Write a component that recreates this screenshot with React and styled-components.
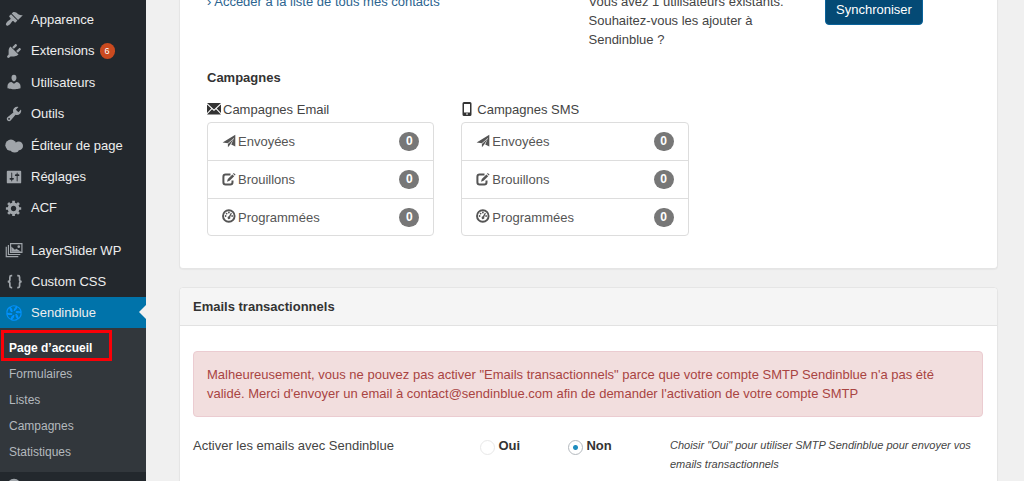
import React from "react";
import styled, { createGlobalStyle, css } from "styled-components";

const GlobalStyle = createGlobalStyle`
  * { box-sizing: border-box; }
  body {
    margin: 0;
    background: #f0f0f0;
    color: #444;
    font-family: "Liberation Sans", Arial, sans-serif;
    font-size: 13px;
    line-height: 19px;
  }
  ul { margin: 0; padding: 0; list-style: none; }
  h2, h3, p { margin: 0; font-size: 13px; }
  a { color: inherit; text-decoration: none; }
`;

const Shell = styled.div`
  display: flex;
  height: 100vh;
  overflow: hidden;
`;

/* ---------- sidebar ---------- */

const Sidebar = styled.nav`
  flex: none;
  width: 146px;
  padding-top: 3px;
  background: #23282d;
  color: #eee;
`;

const MenuGroup = styled.ul`
  & + & { margin-top: 11px; }
`;

const MenuItem = styled.li`
  & > a { height: 32px; }
  &:nth-child(even) > a { height: 31px; }
  &:last-child > a { height: 31px; }
`;

const MenuLink = styled.a`
  position: relative;
  display: flex;
  align-items: center;
  gap: 8px;
  padding-left: 5px;
  white-space: nowrap;
  svg { flex: none; color: #a0a5aa; }
  ${(p) =>
    p.$current &&
    css`
      background: #0073aa;
      svg { color: #0092ff; }
      &::after {
        content: "";
        position: absolute;
        right: 0;
        top: 8px;
        border: 7px solid transparent;
        border-left: 0;
        border-right-color: #f0f0f0;
      }
    `}
`;

const UpdateCount = styled.span`
  width: 15px;
  height: 16px;
  margin-left: -3px;
  border-radius: 8px;
  background: #ca4a1f;
  color: #fff;
  font-size: 9px;
  line-height: 16px;
  text-align: center;
`;

const SubMenu = styled.ul`
  padding: 7px 0;
  background: #32373c;
`;

const SubItem = styled.li`
  position: relative;
  padding-left: 9px;
  color: ${(p) => (p.$current ? "#fff" : "#b4b9be")};
  font-size: 12px;
  font-weight: ${(p) => (p.$current ? "bold" : "normal")};
  line-height: 26px;
`;

const Highlight = styled.span`
  position: absolute;
  left: 1px;
  top: -5px;
  width: 111px;
  height: 31px;
  border: 3px solid #fb0007;
`;

const CollapseButton = styled.button`
  display: block;
  margin: 5px 0 0 5px;
  padding: 0;
  border: 0;
  background: none;
  color: #a0a5aa;
`;

/* ---------- content ---------- */

const Content = styled.main`
  flex: 1;
  min-width: 0;
  padding: 0 26px 0 33px;
`;

const Panel = styled.section`
  border: 1px solid #e5e5e5;
  border-radius: 4px;
  background: #fff;
  box-shadow: 0 1px 1px rgba(0, 0, 0, 0.04);
`;

const StatsPanel = styled(Panel)`
  margin-bottom: 18px;
  padding: 0 27px 32px;
  border-top: 0;
`;

const PanelTitle = styled.h2`
  padding: 9px 13px;
  border-bottom: 1px solid #e2e2e2;
  border-radius: 4px 4px 0 0;
  background: #f5f5f5;
  color: #333;
`;

const PanelBody = styled.div`
  padding: 25px 14px 40px 13px;
`;

const SyncRow = styled.div`
  display: grid;
  grid-template-columns: 50% 31% 1fr;
  align-items: start;
  margin-top: -8px;
`;

const ContactsLink = styled.a`
  color: #2c648f;
`;

const SyncText = styled.p`
  padding-right: 27px;
`;

const SyncButton = styled.button`
  justify-self: start;
  height: 31px;
  margin-top: 2px;
  padding: 0 10px;
  border: 1px solid #0a639b;
  border-radius: 4px;
  background: #044a75;
  color: #fff;
  font: inherit;
`;

const SectionTitle = styled.h3`
  margin: 19px 0 13px;
  color: #333;
`;

const Campaigns = styled.div`
  display: grid;
  grid-template-columns: repeat(3, 1fr);
`;

const Campaign = styled.div`
  padding-right: 27px;
`;

const CampaignTitle = styled.p`
  display: flex;
  align-items: center;
  gap: ${(p) => p.$gap}px;
  margin-bottom: 3px;
  svg { color: #333; margin-top: -2px; }
`;

const CountList = styled.ul`
  border: 1px solid #ddd;
  border-radius: 4px;
  color: #555;
`;

const CountRow = styled.li`
  display: flex;
  align-items: center;
  gap: 2px;
  height: 37px;
  padding: 0 14px;
  & + & { height: 38px; border-top: 1px solid #ddd; }
  &:last-child { height: 37px; }
  svg { flex: none; margin-top: -2px; }
`;

const Count = styled.span`
  min-width: 20px;
  margin-left: auto;
  border-radius: 10px;
  background: #777;
  color: #fff;
  font-size: 12px;
  font-weight: bold;
  text-align: center;
`;

const Alert = styled.div`
  margin-bottom: 19px;
  padding: 13px;
  border: 1px solid #ebccd1;
  border-radius: 4px;
  background: #f2dede;
  color: #a94442;
`;

const SettingRow = styled.div`
  display: grid;
  grid-template-columns: 36% 24% 1fr;
  align-items: start;
`;

const Choices = styled.div`
  display: flex;
  padding-left: 3px;
`;

const Choice = styled.label`
  display: flex;
  align-items: flex-end;
  gap: 3px;
  width: 88px;
  height: 19px;
  color: #333;
  font-weight: bold;
`;

const Radio = styled.input`
  appearance: none;
  width: 15px;
  height: 15px;
  margin: 0;
  border: 1px solid ${(p) => (p.defaultChecked ? "#b4b9be" : "#e8e8e8")};
  border-radius: 50%;
  background: #fff;
  &:checked { background: radial-gradient(circle, #1e8cbe 2px, #fff 3px); }
`;

const Help = styled.p`
  padding-left: 3px;
  font-size: 11px;
  font-style: italic;
`;

/* ---------- icons ---------- */

const MenuIcon = ({ children }) => (
  <svg width="18" height="18" viewBox="0 0 20 20" fill="currentColor" aria-hidden="true">
    {children}
  </svg>
);

const Glyph = ({ children, w = 14 }) => (
  <svg width={w} height="14" viewBox={`0 0 ${w} 14`} fill="currentColor" aria-hidden="true">
    {children}
  </svg>
);

const icons = {
  appearance: (
    <path d="M14.48 11.06L7.41 3.99l1.5-1.5c.5-.56 2.3-.47 3.51.32 1.21.8 1.43 1.28 2.91 2.1 1.18.64 2.45 1.26 4.45.85zm-.71.71L6.7 4.7 4.93 6.47c-.39.39-.39 1.02 0 1.41l1.06 1.06c.39.39.39 1.03 0 1.42-.6.6-1.43 1.11-2.21 1.69-.35.26-.7.53-1.01.84C1.43 14.23.4 16.08 1.4 17.07c.99 1 2.84-.03 4.18-1.36.31-.31.58-.66.85-1.02.57-.78 1.08-1.61 1.69-2.21.39-.39 1.02-.39 1.41 0l1.06 1.06c.39.39 1.02.39 1.41 0z" />
  ),
  plugins: (
    <path d="M13.11 4.36L9.87 7.6 8 5.73l3.24-3.24c.35-.34 1.05-.2 1.56.32.52.51.66 1.21.31 1.55zm-8 1.77l.91-1.12 9.01 9.01-1.19.84c-.71.71-2.63 1.16-3.82 1.16H6.14L4.9 17.26c-.59.59-1.54.59-2.12 0-.59-.58-.59-1.53 0-2.12l1.24-1.24v-3.88c0-1.13.4-3.19 1.09-3.89zm7.26 3.97l3.24-3.24c.34-.35 1.04-.21 1.55.31.52.51.66 1.21.31 1.55l-3.24 3.25z" />
  ),
  users: (
    <path d="M10 9.25c-2.27 0-2.73-3.44-2.73-3.44C7 4.02 7.82 2 9.97 2c2.16 0 2.98 2.02 2.71 3.81 0 0-.41 3.44-2.68 3.44zm0 2.57L12.72 10c2.39 0 4.52 2.33 4.52 4.53v2.49s-3.65 1.13-7.24 1.13c-3.65 0-7.24-1.13-7.24-1.13v-2.49c0-2.25 1.94-4.48 4.47-4.48z" />
  ),
  tools: (
    <path d="M16.68 9.77c-1.34 1.34-3.3 1.67-4.95.99l-5.41 6.52c-.99.99-2.59.99-3.58 0s-.99-2.59 0-3.57l6.52-5.42c-.68-1.65-.35-3.61.99-4.95 1.28-1.28 3.12-1.62 4.72-1.06l-2.89 2.89 2.82 2.82 2.86-2.87c.53 1.58.18 3.39-1.08 4.65zM3.81 16.21c.4.39 1.04.39 1.43 0 .4-.4.4-1.04 0-1.43-.39-.4-1.03-.4-1.43 0-.39.39-.39 1.03 0 1.43z" />
  ),
  editor: (
    <g>
      <circle cx="6.6" cy="10.2" r="6.2" />
      <circle cx="15.2" cy="11" r="4.8" />
      <ellipse cx="10.8" cy="15" rx="4.6" ry="3.3" />
    </g>
  ),
  settings: (
    <path d="M18 16V4c0-.55-.45-1-1-1H3c-.55 0-1 .45-1 1v12c0 .55.45 1 1 1h14c.55 0 1-.45 1-1zM8 11h1c.55 0 1 .45 1 1s-.45 1-1 1H8v1.5c0 .28-.22.5-.5.5s-.5-.22-.5-.5V13H6c-.55 0-1-.45-1-1s.45-1 1-1h1V5.5c0-.28.22-.5.5-.5s.5.22.5.5V11zm5-2h-1c-.55 0-1-.45-1-1s.45-1 1-1h1V5.5c0-.28.22-.5.5-.5s.5.22.5.5V7h1c.55 0 1 .45 1 1s-.45 1-1 1h-1v5.5c0 .28-.22.5-.5.5s-.5-.22-.5-.5V9z" />
  ),
  generic: (
    <path d="M18 12h-2.18c-.17.7-.44 1.35-.81 1.93l1.54 1.54-2.1 2.1-1.54-1.54c-.58.36-1.23.63-1.91.79V19H8v-2.18c-.68-.16-1.33-.43-1.91-.79l-1.54 1.54-2.12-2.12 1.54-1.54c-.36-.58-.63-1.23-.79-1.91H1V9.03h2.17c.16-.7.44-1.35.8-1.94L2.43 5.55l2.1-2.1 1.54 1.54c.58-.37 1.24-.64 1.93-.81V2h3v2.18c.68.16 1.33.43 1.91.79l1.54-1.54 2.12 2.12-1.54 1.54c.36.59.64 1.24.8 1.94H18V12zm-8.500 1.500c1.660 0 3-1.340 3-3s-1.340-3-3-3-3 1.340-3 3 1.340 3 3 3z" />
  ),
  layers: (
    <g>
      <g fill="none" stroke="currentColor" strokeWidth="1.300">
        <path d="M6.200 3h12.600v9.600H6.200z" />
        <path d="M3.800 4.500V15h13.200M1.400 6.500v10.900h13.400" />
      </g>
      <path d="M7 12V6.200l4 3.400 1.600-1 5.400 3.400z" />
      <circle cx="15.300" cy="6.300" r="1.500" />
    </g>
  ),
  braces: (
    <path
      fill="none"
      stroke="currentColor"
      strokeWidth="1.900"
      d="M8 3H7Q5.400 3 5.400 4.800V7.600Q5.400 9.600 3 9.600Q5.400 9.600 5.400 11.800V14.400Q5.400 16.200 7 16.200H8M13.600 3h1Q16.200 3 16.200 4.800V7.600Q16.200 9.600 18.600 9.600Q16.200 9.600 16.200 11.800V14.400Q16.200 16.200 14.600 16.200h-1"
    />
  ),
  sendinblue: (
    <g fill="none" stroke="currentColor" strokeWidth="1.300">
      {[0, 60, 120, 180, 240, 300].map((a) => (
        <path key={a} transform={`rotate(${a} 10 10)`} d="M9.800 7.400Q13 6.200 13 2.600Q8.400 .8 5.600 3.800Q5.800 7.600 8 8.600" />
      ))}
    </g>
  ),
  collapse: (
    <path fillRule="evenodd" d="M10 2a8 8 0 1 1 0 16 8 8 0 0 1 0-16zM12.500 5.500L6.500 10l6 4.500z" />
  ),
};

const EnvelopeIcon = () => (
  <Glyph>
    <path d="M0 1h14L7 7.400zM0 2.600l4.300 4L0 11zM14 2.600L9.700 6.600 14 11zM5 7.300l2 1.800 2-1.800 5 5.200H0z" />
  </Glyph>
);

const PhoneIcon = () => (
  <Glyph w={12}>
    <path fillRule="evenodd" d="M3 0h6a1.500 1.500 0 0 1 1.500 1.500v11A1.500 1.500 0 0 1 9 14H3a1.500 1.500 0 0 1-1.500-1.500v-11A1.500 1.500 0 0 1 3 0zM3 2v8.500h6V2zM5 11.500v1h2v-1z" />
  </Glyph>
);

const SendIcon = () => (
  <Glyph>
    <path d="M13.300 .8v11.600L9.200 10.600 12.200 3.800 5.800 9.300.6 8.600zM5.900 9.900L11.700 4.800 8.100 10.800 5.900 13.300z" />
  </Glyph>
);

const EditIcon = () => (
  <Glyph>
    <path fill="none" stroke="currentColor" strokeWidth="2" d="M8.500 2.500H3.600Q1.400 2.500 1.400 4.700V10.300Q1.400 12.500 3.600 12.500H8.300Q10.500 12.500 10.500 10.300V8.600" />
    <path d="M5 9.700l.8-2.700 4.600-4.600 1.800 1.800-4.600 4.600zM11 1.800l.8-.8 1.800 1.700-.8.9z" />
  </Glyph>
);

const DashboardIcon = () => (
  <Glyph>
    <circle cx="6.800" cy="7" r="5.800" fill="none" stroke="currentColor" strokeWidth="1.900" />
    <circle cx="3.600" cy="7" r=".9" />
    <circle cx="4.600" cy="4.600" r=".9" />
    <circle cx="6.900" cy="3.500" r=".9" />
    <circle cx="10.100" cy="7" r=".9" />
    <path d="M8.900 3.700l1 .5-1.700 3.800a1.400 1.400 0 1 1-1.300-.7z" />
  </Glyph>
);

/* ---------- data ---------- */

const mainMenu = [
  { label: "Apparence", icon: "appearance" },
  { label: "Extensions", icon: "plugins", updates: 6 },
  { label: "Utilisateurs", icon: "users" },
  { label: "Outils", icon: "tools" },
  { label: "Éditeur de page", icon: "editor" },
  { label: "Réglages", icon: "settings" },
  { label: "ACF", icon: "generic" },
];

const pluginMenu = [
  { label: "LayerSlider WP", icon: "layers" },
  { label: "Custom CSS", icon: "braces" },
  { label: "Sendinblue", icon: "sendinblue", current: true },
];

const subMenu = ["Page d’accueil", "Formulaires", "Listes", "Campagnes", "Statistiques"];

const Menu = ({ items }) => (
  <MenuGroup>
    {items.map((item) => (
      <MenuItem key={item.label}>
        <MenuLink href="#" $current={item.current}>
          <MenuIcon>{icons[item.icon]}</MenuIcon>
          {item.label}
          {item.updates && <UpdateCount>{item.updates}</UpdateCount>}
        </MenuLink>
      </MenuItem>
    ))}
  </MenuGroup>
);

const CampaignCard = ({ icon, gap, title }) => (
  <Campaign>
    <CampaignTitle $gap={gap}>
      {icon}
      {title}
    </CampaignTitle>
    <CountList>
      <CountRow><SendIcon /> Envoyées <Count>0</Count></CountRow>
      <CountRow><EditIcon /> Brouillons <Count>0</Count></CountRow>
      <CountRow><DashboardIcon /> Programmées <Count>0</Count></CountRow>
    </CountList>
  </Campaign>
);

export default function App() {
  return (
    <>
      <GlobalStyle />
      <Shell>
        <Sidebar>
          <Menu items={mainMenu} />
          <Menu items={pluginMenu} />
          <SubMenu>
            {subMenu.map((label, i) => (
              <SubItem key={label} $current={i === 0}>
                <a href="#">{label}</a>
                {i === 0 && <Highlight />}
              </SubItem>
            ))}
          </SubMenu>
          <CollapseButton type="button">
            <MenuIcon>{icons.collapse}</MenuIcon>
          </CollapseButton>
        </Sidebar>

        <Content>
          <StatsPanel>
            <SyncRow>
              <ContactsLink href="#">› Accéder à la liste de tous mes contacts</ContactsLink>
              <SyncText>
                Vous avez 1 utilisateurs existants. Souhaitez-vous les ajouter à Sendinblue ?
              </SyncText>
              <SyncButton type="button">Synchroniser</SyncButton>
            </SyncRow>
            <SectionTitle>Campagnes</SectionTitle>
            <Campaigns>
              <CampaignCard icon={<EnvelopeIcon />} gap={2} title="Campagnes Email" />
              <CampaignCard icon={<PhoneIcon />} gap={4} title="Campagnes SMS" />
            </Campaigns>
          </StatsPanel>

          <Panel>
            <PanelTitle>Emails transactionnels</PanelTitle>
            <PanelBody>
              <Alert role="alert">
                Malheureusement, vous ne pouvez pas activer "Emails transactionnels" parce que
                votre compte SMTP Sendinblue n'a pas été validé. Merci d'envoyer un email à
                contact@sendinblue.com afin de demander l'activation de votre compte SMTP
              </Alert>
              <SettingRow>
                <span>Activer les emails avec Sendinblue</span>
                <Choices>
                  <Choice>
                    <Radio type="radio" name="smtp" value="yes" />
                    Oui
                  </Choice>
                  <Choice>
                    <Radio type="radio" name="smtp" value="no" defaultChecked />
                    Non
                  </Choice>
                </Choices>
                <Help>
                  Choisir "Oui" pour utiliser SMTP Sendinblue pour envoyer vos emails
                  transactionnels
                </Help>
              </SettingRow>
            </PanelBody>
          </Panel>
        </Content>
      </Shell>
    </>
  );
}
